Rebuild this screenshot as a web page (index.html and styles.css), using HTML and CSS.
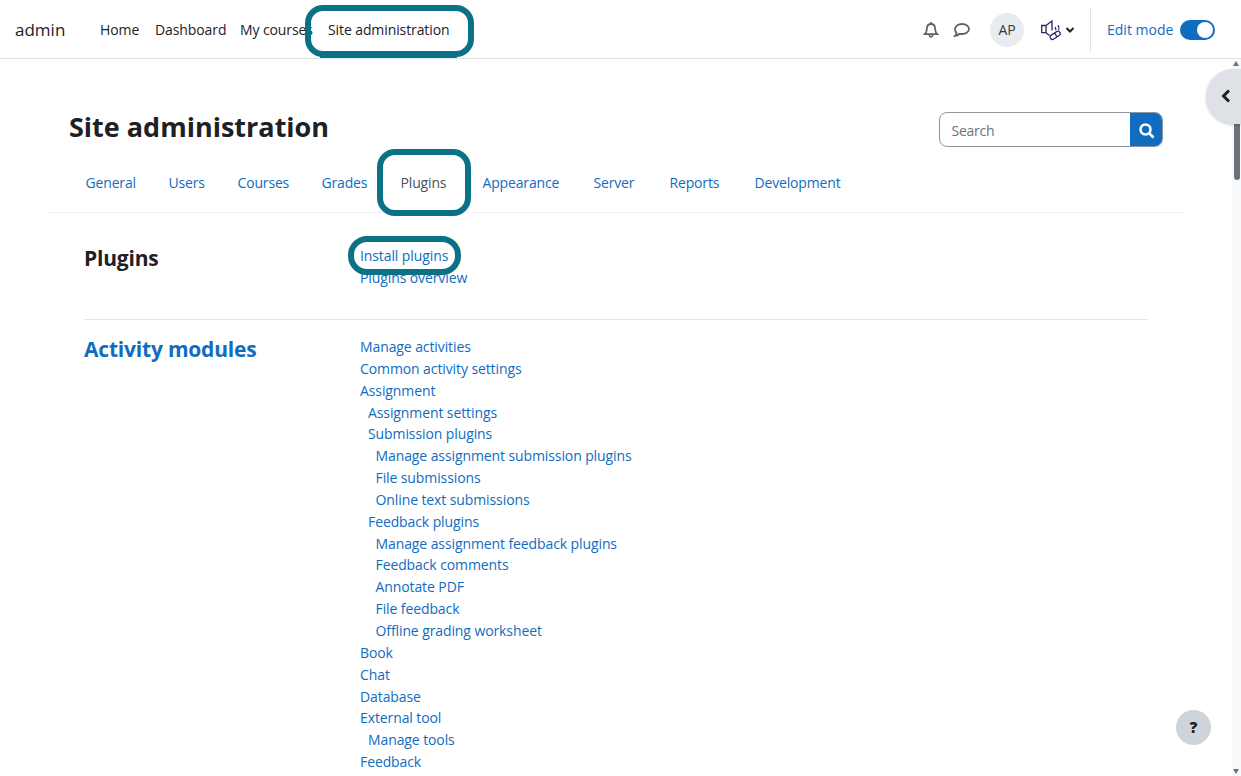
FILE: index.html
```html
<!DOCTYPE html>
<html lang="en">
<head>
<meta charset="utf-8">
<title>Site administration</title>
<link rel="stylesheet" href="styles.css">
</head>
<body>
<header class="navbar">
  <a class="brand">admin</a>
  <nav class="primary">
    <a class="w-home">Home</a><a class="w-dash">Dashboard</a><a class="w-courses">My courses</a><a class="current">Site administration</a>
  </nav>
  <div class="tools">
    <svg class="bell" viewBox="0 0 16 18"><path d="M8 1v2M1.800 13.200C4 11.300 3.700 8.600 4 6.700C4.300 4.300 5.900 3 8 3s3.700 1.300 4 3.700c.3 1.900 0 4.600 2.200 6.500z"/><path d="M6.300 14.200c.3 2.200 3.100 2.200 3.400 0" /></svg>
    <svg class="chat" viewBox="0 0 18 16"><path d="M9 2c4 0 7 2.200 7 5s-3 5-7 5c-.8 0-1.500-.1-2.200-.2C5.400 13 3.800 13.800 2 13.900c.9-.9 1.400-1.900 1.500-3C2.500 9.900 2 8.500 2 7c0-2.800 3-5 7-5z"/></svg>
    <span class="avatar">AP</span>
    <svg class="sound" viewBox="0 0 22 22"><path d="M1.700 6.500h4.300v7.200H1.700zM6 6.500l6-4.500v9.500M6 13.700l3.500 2.800"/><path d="M15.200 8l.8 3M18 6.200c1.200 1.600 1.300 3.300.6 5"/><rect x="9.700" y="14" width="11" height="4.600" rx="2.300" transform="rotate(-33 15.200 16.300)"/><path d="M14.600 14.200l2.500 3.800"/></svg>
    <svg class="caret" viewBox="0 0 10 8"><path d="M1.500 2l3.500 3.500L8.500 2"/></svg>
  </div>
  <div class="edit"><span>Edit mode</span><i class="switch"></i></div>
</header>
<main class="page">
  <div class="heading">
    <h1>Site administration</h1>
    <div class="search"><span>Search</span><b><svg viewBox="0 0 16 16"><circle cx="6.500" cy="6.500" r="5"/><path d="M10.300 10.300l4.200 4.200"/></svg></b></div>
  </div>
  <nav class="tabs">
    <a class="t1">General</a><a class="t2">Users</a><a class="t3">Courses</a><a class="t4">Grades</a><a class="t5">Plugins</a><a class="t6">Appearance</a><a class="t7">Server</a><a class="t8">Reports</a><a class="t9">Development</a>
  </nav>
  <section class="group first">
    <h2>Plugins</h2>
    <ul class="links"><li>Install plugins</li><li>Plugins overview</li></ul>
  </section>
  <section class="group">
    <h2 class="link">Activity modules</h2>
    <ul class="links">
      <li>Manage activities</li>
      <li>Common activity settings</li>
      <li>Assignment</li>
      <li class="l2">Assignment settings</li>
      <li class="l2">Submission plugins</li>
      <li class="l3">Manage assignment submission plugins</li>
      <li class="l3">File submissions</li>
      <li class="l3">Online text submissions</li>
      <li class="l2">Feedback plugins</li>
      <li class="l3">Manage assignment feedback plugins</li>
      <li class="l3">Feedback comments</li>
      <li class="l3">Annotate PDF</li>
      <li class="l3">File feedback</li>
      <li class="l3">Offline grading worksheet</li>
      <li>Book</li>
      <li>Chat</li>
      <li>Database</li>
      <li>External tool</li>
      <li class="l2">Manage tools</li>
      <li>Feedback</li>
    </ul>
  </section>
</main>
<div class="scrollbar"><i class="up"></i><i class="thumb"></i><i class="down"></i></div>
<div class="drawer"><svg viewBox="0 0 12 16"><path d="M9 2.500L3.500 8L9 13.500"/></svg></div>
<div class="help">?</div>
<div class="mark mark-nav"></div>
<div class="mark mark-tab"></div>
<div class="mark mark-link"></div>
</body>
</html>
```
FILE: styles.css
```css
* { box-sizing: border-box; }
body { margin: 0; height: 776px; overflow: hidden; position: relative; background: #fff; color: #1d2125; font-family: "Open Sans", "Noto Sans", sans-serif; font-size: 14px; letter-spacing: -0.1px; }
a, li, h1, h2, span { white-space: nowrap; }
svg { fill: none; stroke: currentColor; flex: none; }

.navbar { height: 59px; border-bottom: 1px solid #dee2e6; display: flex; align-items: center; padding-left: 15px; }
.brand { width: 77px; font-size: 17px; letter-spacing: 0; }
.primary { display: flex; height: 58px; line-height: 59px; }
.primary a { padding-left: 8px; }
.w-home { width: 55px; }
.w-dash { width: 85px; }
.w-courses { width: 88px; }
.primary .current { width: 137px; border-bottom: 3px solid #0f6cbf; }
.tools { margin-left: 466px; padding-top: 2px; display: flex; align-items: center; color: #5c636a; }
.bell { width: 16px; height: 18px; stroke-width: 1.8; }
.chat { width: 18px; height: 16px; margin-left: 14px; stroke-width: 1.8; }
.avatar { width: 34px; height: 34px; margin-left: 19px; border-radius: 50%; background: #e9ecef; color: #343a40; text-align: center; line-height: 34px; }
.sound { width: 22px; height: 22px; margin-left: 16px; color: #35206b; stroke-width: 1.3; }
.caret { width: 10px; height: 8px; margin-left: 3px; color: #1d2125; stroke-width: 2; }
.edit { margin: 1px 0 0 15px; height: 44px; border-left: 1px solid #dee2e6; padding-left: 16px; display: flex; align-items: center; color: #0f6cbf; }
.edit span { width: 73px; letter-spacing: 0; }
.switch { width: 35px; height: 20px; border-radius: 10px; background: #0f6cbf; padding: 2px 2px 2px 17px; }
.switch::before { content: ""; display: block; width: 16px; height: 16px; border-radius: 50%; background: #fff; }

.page { margin-left: 46px; width: 1140px; }
.heading { display: flex; justify-content: space-between; padding: 53px 23px 0; height: 94px; }
h1 { margin: -2px 0 0; font-size: 27px; line-height: 34px; font-weight: 700; letter-spacing: 0; }
.search { width: 224px; height: 35px; display: flex; border: 1px solid #8f959e; border-radius: 8px; overflow: hidden; color: #6a737b; line-height: 35px; }
.search span { flex: 1; padding-left: 11.500px; letter-spacing: -0.250px; }
.search b { width: 33px; margin: -1px -1px -1px 0; background: #0f6cbf; color: #fff; display: flex; align-items: center; justify-content: center; padding-top: 2px; }
.search svg { width: 16px; height: 16px; stroke-width: 2.5; }
.tabs { display: flex; height: 60px; line-height: 60px; border-bottom: 1px solid #f0f1f2; padding-left: 22.500px; color: #0f6cbf; letter-spacing: -0.160px; }
.tabs a { padding-left: 17px; }
.t1 { width: 83px; } .t2 { width: 69px; } .t3 { width: 84px; } .t4 { width: 79px; } .tabs .t5 { width: 82px; color: #495057; }
.t6 { width: 111px; } .t7 { width: 76px; } .t8 { width: 85px; } .t9 { width: 110px; }

.group { display: grid; grid-template-columns: 276px 1fr; margin: 0 38px; padding-top: 16px; }
.group.first { padding-top: 32px; height: 107px; border-bottom: 1px solid #e3e6e8; }
h2 { margin: -1px 0 0; font-size: 21px; line-height: 28px; font-weight: 700; letter-spacing: -0.200px; }
.link { color: #0f6cbf; }
.links { margin: 0; padding: 0; list-style: none; color: #0f6cbf; line-height: 21.850px; }
.l2 { padding-left: 8px; }
.l3 { padding-left: 15.500px; }

.scrollbar { position: absolute; left: 1232px; top: 59px; width: 9px; height: 717px; background: #f8f9fb; }
.scrollbar i { position: absolute; }
.up { left: 1px; top: 2px; border: 3.500px solid transparent; border-top: 0; border-bottom: 5px solid #6a737b; }
.down { left: 1px; bottom: 2px; border: 3.500px solid transparent; border-bottom: 0; border-top: 5px solid #6a737b; }
.thumb { left: 2px; top: 40px; width: 6px; height: 81px; border-radius: 3px; background: #6a737b; }
.drawer { position: absolute; right: 0; top: 69px; width: 35px; height: 55px; border-radius: 28px 0 0 28px; background: #dee2e6; box-shadow: 0 1px 3px #0003; padding: 19px 0 0 14px; }
.drawer svg { width: 12px; height: 16px; stroke-width: 3; display: block; }
.help { position: absolute; left: 1176px; top: 710px; width: 35px; height: 35px; border-radius: 50%; background: #ced4da; text-align: center; line-height: 35px; font-weight: 800; font-size: 15px; }
.mark { position: absolute; border: 6px solid #0b7285; }
.mark-nav { left: 305px; top: 5px; width: 169px; height: 52px; border-radius: 18px; }
.mark-tab { left: 377px; top: 149px; width: 94px; height: 67px; border-radius: 18px; }
.mark-link { left: 348px; top: 236px; width: 113px; height: 39px; border-radius: 19px; }
```
